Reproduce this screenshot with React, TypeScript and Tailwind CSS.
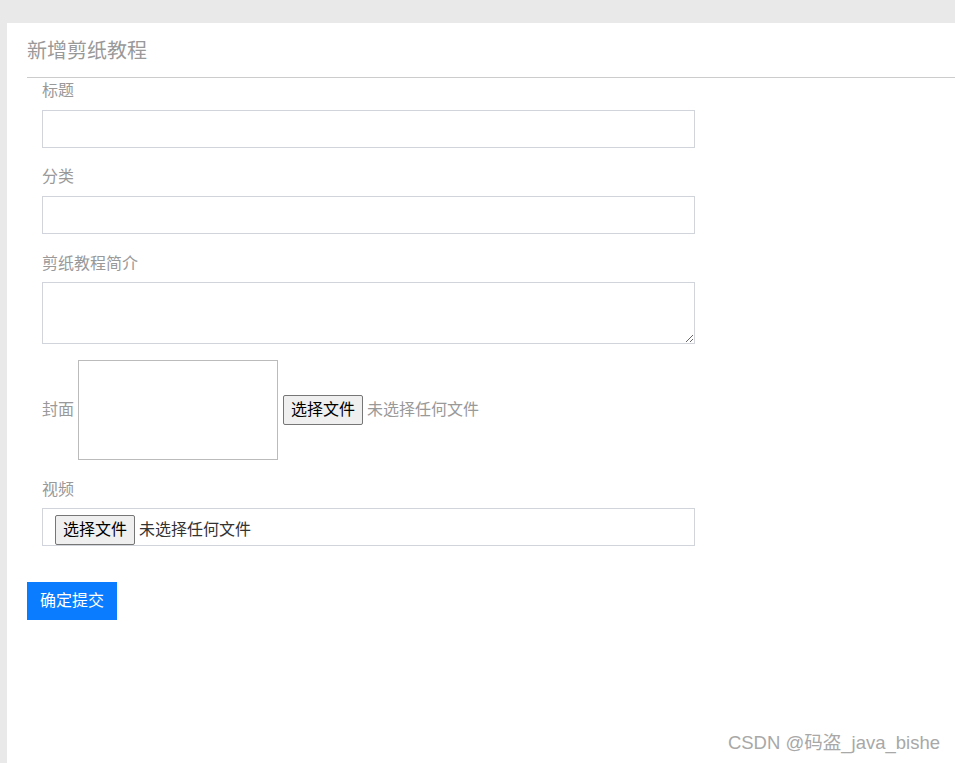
export default function App() {
  const font = { fontFamily: '"Liberation Sans", "Noto Sans CJK SC", sans-serif' }
  return (
    <div className="min-h-[763px] bg-[#e9e9e9] pt-[23px] pl-[7px]" style={font}>
      <div className="relative min-h-[740px] bg-white pl-5">
        <h2 className="pt-[14px] pb-[12px] text-[20px] leading-[28px] text-[#999]">新增剪纸教程</h2>
        <div className="h-px bg-[#ccc]" />

        <form className="pl-[15px] pt-[2px] text-[16px] text-[#999]">
          <label className="block h-5 leading-[21px]">标题</label>
          <input className="mt-[10px] block h-[38px] w-[653px] border border-[#d1d5db] outline-none" />

          <label className="mt-[18px] block h-5 leading-[21px]">分类</label>
          <input className="mt-[10px] block h-[38px] w-[653px] border border-[#d1d5db] outline-none" />

          <label className="mt-[19px] block h-5 leading-[21px]">剪纸教程简介</label>
          <textarea className="mt-[9px] block h-[62px] w-[653px] border border-[#d1d5db] outline-none" />

          <div className="mt-4 flex items-center">
            <span>封面</span>
            <div className="ml-1 h-[100px] w-[200px] border border-[#bbb]" />
            <button
              type="button"
              className="ml-[5px] h-[30px] w-[80px] rounded-[2px] border border-[#767676] bg-[#efefef] text-[16px] text-black"
            >
              选择文件
            </button>
            <span className="ml-1">未选择任何文件</span>
          </div>

          <label className="mt-[19px] block h-5 leading-[21px]">视频</label>
          <div className="mt-[9px] flex h-[38px] w-[653px] items-end border border-[#d1d5db] pl-3">
            <button
              type="button"
              className="h-[30px] w-[80px] rounded-[2px] border border-[#767676] bg-[#efefef] text-[16px] text-black"
            >
              选择文件
            </button>
            <span className="ml-1 self-center pt-[6px] text-[#333]">未选择任何文件</span>
          </div>
        </form>

        <button className="mt-9 h-[38px] w-[90px] bg-[#0a7cff] text-[16px] text-white">确定提交</button>

        <div className="absolute right-[15px] bottom-[6px] text-[18.5px] text-[#a8a8a8]">CSDN @码盗_java_bishe</div>
      </div>
    </div>
  )
}
